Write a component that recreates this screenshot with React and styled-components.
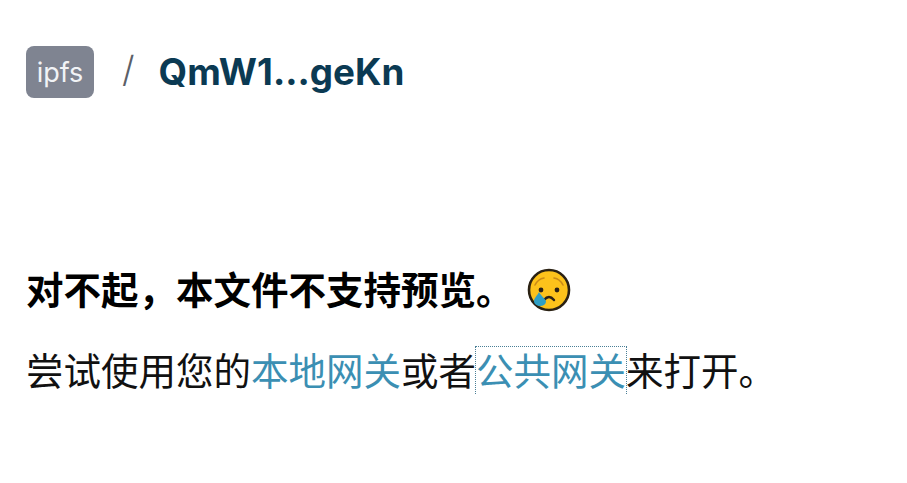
import React from "react";
import styled, { createGlobalStyle } from "styled-components";

const GlobalStyle = createGlobalStyle`
  html, body {
    margin: 0;
    background: #fff;
    font-family: "Inter", "Noto Sans CJK SC", sans-serif;
  }
`;

const Page = styled.div`
  padding: 46px 26px 0;
`;

const Breadcrumb = styled.header`
  display: flex;
  align-items: center;
  height: 52px;
`;

const Badge = styled.span`
  display: flex;
  align-items: center;
  justify-content: center;
  width: 68px;
  height: 52px;
  border-radius: 8px;
  background: #7f8491;
  color: #f1f3f6;
  font-size: 27px;
`;

const Slash = styled.span`
  margin: 0 0 6px 28px;
  color: #5b6068;
  font-size: 36px;
  font-weight: 300;
`;

const Hash = styled.span`
  margin-left: 24px;
  color: #0b3a53;
  font-size: 36.8px;
  font-weight: 700;
  line-height: 48px;
`;

const Content = styled.main`
  margin-top: 164px;
`;

const Title = styled.h1`
  display: flex;
  align-items: center;
  margin: 0;
  height: 50px;
  color: #000;
  font-family: "Noto Sans CJK SC", sans-serif;
  font-size: 37.5px;
  font-weight: 700;
`;

const Face = styled.svg`
  margin: 6px 0 0 13px;
  width: 44px;
  height: 44px;
`;

const Message = styled.p`
  margin: 32px 0 0;
  color: #111;
  font-family: "Noto Sans CJK SC", sans-serif;
  font-size: 37.5px;
  line-height: 50px;
`;

const GatewayLink = styled.a`
  display: inline-block;
  padding-bottom: 4px;
  color: #3b8fb3;
  line-height: 44px;
  text-decoration: none;
  outline: ${(props) => (props.$focused ? "1px dotted #4a7f96" : "none")};
`;

const SadFace = () => (
  <Face viewBox="0 0 44 44">
    <circle cx="22" cy="22" r="20" fill="#fcc21b" stroke="#2a2113" strokeWidth="2.6" />
    <path d="M8 17q3-6 9-7M36 17q-3-6-9-7" fill="none" stroke="#c98a17" strokeWidth="1.6" strokeLinecap="round" />
    <circle cx="14" cy="22" r="2.4" fill="#2b2115" />
    <circle cx="30" cy="22" r="2.4" fill="#2b2115" />
    <path d="M17 32q5-6 10 0" fill="none" stroke="#2b2115" strokeWidth="2.4" strokeLinecap="round" />
    <path d="M12 24c-2 4-5 6-5 9 0 6 11 7 12 1 0-3-5-6-7-10z" fill="#2f9fc4" />
  </Face>
);

export default function App() {
  return (
    <Page>
      <GlobalStyle />
      <Breadcrumb>
        <Badge>ipfs</Badge>
        <Slash>/</Slash>
        <Hash>QmW1...geKn</Hash>
      </Breadcrumb>
      <Content>
        <Title>
          对不起，本文件不支持预览。
          <SadFace />
        </Title>
        <Message>
          尝试使用您的<GatewayLink href="#">本地网关</GatewayLink>或者
          <GatewayLink href="#" $focused>公共网关</GatewayLink>来打开。
        </Message>
      </Content>
    </Page>
  );
}
